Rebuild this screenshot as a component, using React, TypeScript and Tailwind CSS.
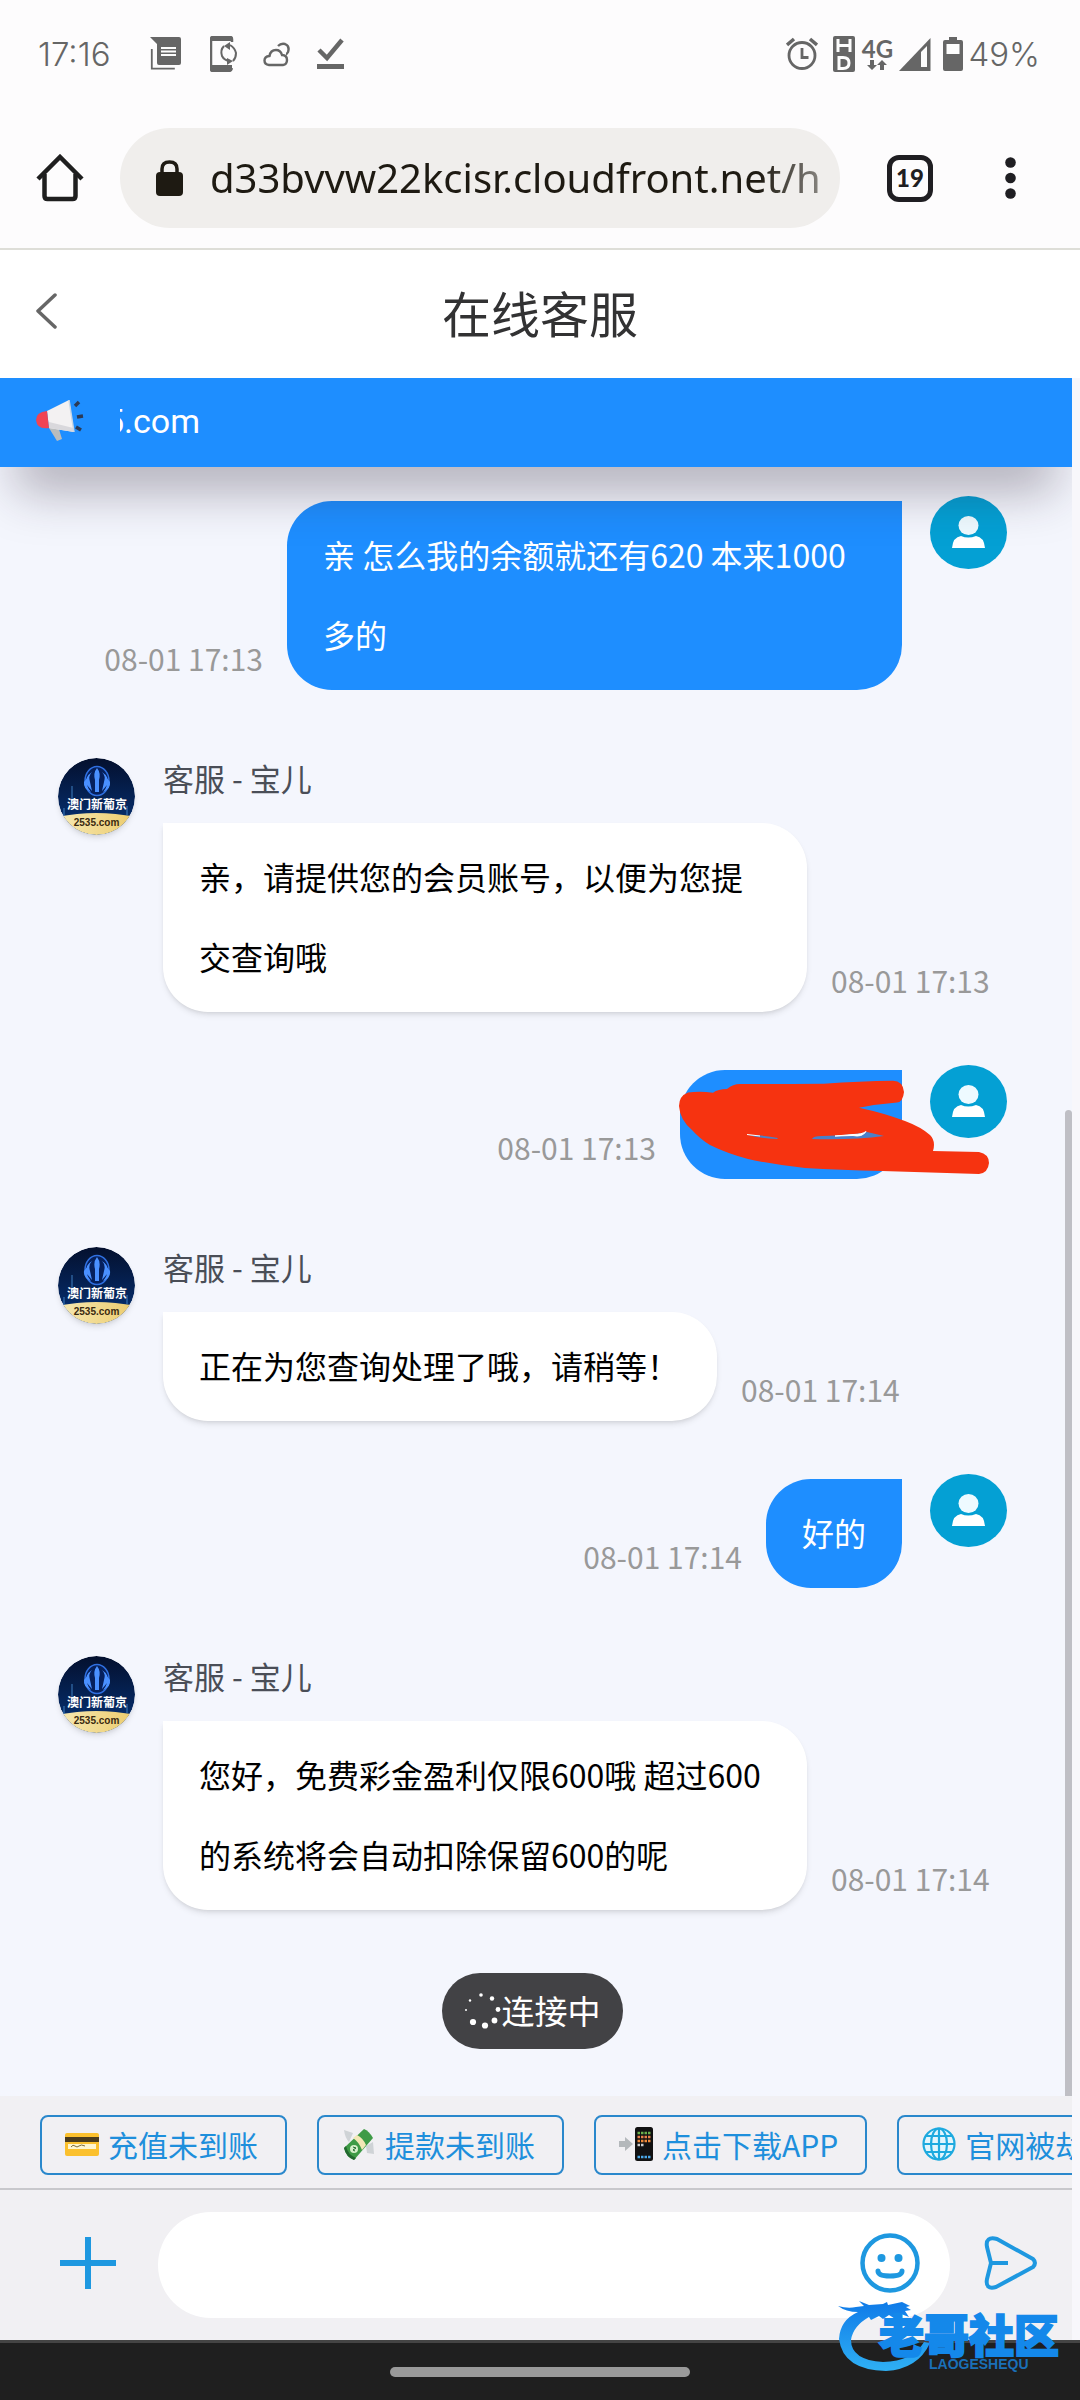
import { useState } from "react";
import type { ReactNode } from "react";

type Message = {
  id: number;
  from: "me" | "agent";
  text: string;
  time: string;
  hidden?: boolean;
};

const AGENT_NAME = "客服 - 宝儿";

const messages: Message[] = [
  { id: 1, from: "me", text: "亲 怎么我的余额就还有620 本来1000多的", time: "08-01 17:13" },
  { id: 2, from: "agent", text: "亲，请提供您的会员账号，以便为您提交查询哦", time: "08-01 17:13" },
  { id: 3, from: "me", text: "", time: "08-01 17:13", hidden: true },
  { id: 4, from: "agent", text: "正在为您查询处理了哦，请稍等！", time: "08-01 17:14" },
  { id: 5, from: "me", text: "好的", time: "08-01 17:14" },
  { id: 6, from: "agent", text: "您好，免费彩金盈利仅限600哦 超过600的系统将会自动扣除保留600的呢", time: "08-01 17:14" },
];

function StatusBar() {
  return (
    <div className="flex h-[108px] items-center justify-between pl-[38px] pr-10 text-[#666]">
      <div className="flex items-center">
        <span className="w-[112px] font-['Inter','Noto_Sans_CJK_SC',sans-serif] text-[33px] font-light leading-none">17:16</span>
        <svg width="32" height="34" viewBox="0 0 32 34" fill="currentColor" aria-hidden="true">
          <path d="M0 0h29q2 0 2 2v24q0 2-2 2H9q-2 0-2-2V7z" />
          <path d="M1.800 12v19.700h23" fill="none" stroke="currentColor" strokeWidth="1.800" />
          <path d="M11 11h15M11 14.500h15M11 18h15" stroke="#fdfdfd" strokeWidth="1.800" />
        </svg>
        <svg className="ml-7" width="28" height="36" viewBox="0 0 28 36" fill="none" stroke="currentColor" aria-hidden="true">
          <path d="M22 6V3q0-2-2-2H3Q1 1 1 3v30q0 2 2 2h16q2 0 3-3" strokeWidth="2.500" />
          <path d="M1 1h21v4H1zM1 29h21v6H1z" fill="currentColor" stroke="none" />
          <path d="M14 10q-4 4-2 10 2 4 7 5M20 9q5 3 6 8 0 5-3 8" strokeWidth="2" />
          <path d="M14 10l6-4v8zM23 25l-6-3v7z" fill="currentColor" stroke="none" />
        </svg>
        <svg className="ml-[25px]" width="28" height="25" viewBox="0 0 28 25" fill="none" stroke="currentColor" strokeWidth="2.400" aria-hidden="true">
          <path d="M6 23q-4.500-.5-4.500-4.500 0-4 5-4.500 1-6 6.500-6 4.500 0 6 5 5 0 5 5 0 4.500-4 5z" />
          <path d="M15 4q3-3 7-2 5 2 3 8-1 2-2 2" />
        </svg>
        <svg className="ml-[26px]" width="27" height="34" viewBox="0 0 27 34" fill="none" stroke="currentColor" aria-hidden="true">
          <path d="M2 13l8 8L25 3" strokeWidth="4.500" />
          <path d="M0 29.500h27" strokeWidth="5" />
        </svg>
      </div>
      <div className="flex items-center">
        <svg width="32" height="34" viewBox="0 0 32 34" fill="none" stroke="currentColor" strokeWidth="2.800" aria-hidden="true">
          <circle cx="16" cy="18.500" r="13" />
          <path d="M1 8l7-6M31 8l-7-6" strokeWidth="3.500" />
          <path d="M16 11v9.500h6.500" />
        </svg>
        <svg className="ml-[15px]" width="22" height="36" viewBox="0 0 22 36" aria-hidden="true">
          <rect width="22" height="36" rx="2" fill="#666" />
          <path d="M5 3v13M17 3v13M5 9.500h12" stroke="#fdfdfd" strokeWidth="3" />
          <path d="M6 21.500h4q6 0 6 5.500t-6 5.500H6z" fill="none" stroke="#fdfdfd" strokeWidth="3" />
        </svg>
        <div className="ml-1 flex w-9 flex-col items-center font-['Lato',sans-serif] text-2xl font-bold leading-[22px]">
          4G
          <svg width="20" height="10" viewBox="0 0 20 10" fill="currentColor" aria-hidden="true">
            <path d="M3 0h4v5h3l-5 5-5-5h3zM13 10h4V5h3l-5-5-5 5h3z" />
          </svg>
        </div>
        <svg className="ml-1" width="32" height="33" viewBox="0 0 32 33" aria-hidden="true">
          <path d="M0 33L31.500 0v33z" fill="#666" />
          <path d="M22 14l6-6v21h-6z" fill="#fdfdfd" />
        </svg>
        <svg className="ml-3" width="20" height="34" viewBox="0 0 20 34" aria-hidden="true">
          <path d="M6 0h8v3h4q2 0 2 2v27q0 2-2 2H2q-2 0-2-2V5q0-2 2-2h4z" fill="#666" />
          <path d="M3.500 7h13v10h-13z" fill="#fdfdfd" />
        </svg>
        <span className="ml-[5px] font-['Inter','Noto_Sans_CJK_SC',sans-serif] text-[33px] font-light leading-none">49%</span>
      </div>
    </div>
  );
}

function BrowserBar() {
  return (
    <div className="flex h-[142px] items-center border-b-2 border-[#deded8] px-9">
      <button type="button" aria-label="Home" className="text-[#1f1f1f]">
        <svg width="48" height="48" viewBox="0 0 48 48" fill="none" stroke="currentColor" strokeWidth="4.500" aria-hidden="true">
          <path d="M2 25L24 3l22 22" />
          <path d="M8.500 20v22q0 3 3 3h25q3 0 3-3V20" />
        </svg>
      </button>
      <label className="ml-9 flex h-[100px] min-w-0 flex-1 items-center rounded-full bg-[#f0eeec] pl-9 pr-5">
        <svg className="shrink-0" width="27" height="36" viewBox="0 0 27 36" aria-hidden="true">
          <rect y="12" width="27" height="24" rx="4" fill="#1e1a12" />
          <path d="M6 14V9q0-7 7.500-7T21 9v5" fill="none" stroke="#1e1a12" strokeWidth="3.500" />
        </svg>
        <input
          aria-label="Address"
          defaultValue="d33bvvw22kcisr.cloudfront.net/h"
          className="ml-[27px] w-full min-w-0 flex-1 bg-transparent font-['Noto_Sans',sans-serif] text-[40px] text-[#1e1a12] outline-none [mask-image:linear-gradient(to_right,black_90%,rgba(0,0,0,0.5))]"
        />
      </label>
      <button type="button" aria-label="Tabs" className="ml-[47px] flex h-[47px] w-[46px] items-center justify-center rounded-xl border-[5px] border-[#1f1e22] font-['Lato',sans-serif] text-2xl font-black text-[#1f1e22]">
        19
      </button>
      <button type="button" aria-label="More" className="ml-[72px] mr-[28px]">
        <svg width="11" height="42" viewBox="0 0 11 42" fill="#1f1e22" aria-hidden="true">
          <circle cx="5.500" cy="5.500" r="5.300" />
          <circle cx="5.500" cy="21" r="5.300" />
          <circle cx="5.500" cy="36.500" r="5.300" />
        </svg>
      </button>
    </div>
  );
}

function Header() {
  return (
    <header className="grid h-32 grid-cols-[1fr_auto_1fr] items-center bg-white px-9 pb-[6px]">
      <button type="button" aria-label="返回" className="w-6">
        <svg width="22" height="36" viewBox="0 0 22 36" fill="none" stroke="#666" strokeWidth="3.500" strokeLinecap="round" strokeLinejoin="round" aria-hidden="true">
          <path d="M19 2L2 18l17 16" />
        </svg>
      </button>
      <h1 className="text-[49px] leading-none text-[#323233]">在线客服</h1>
    </header>
  );
}

function Notice() {
  return (
    <div className="relative z-10 flex h-[89px] items-center bg-[#1e8eff] pb-1 pl-9 shadow-[0_40px_50px_-16px_rgba(40,30,50,0.34)]">
      <svg width="48" height="42" viewBox="0 0 48 42" aria-hidden="true">
        <path d="M13 28l8 13 5-2-4-13z" fill="#b9bcbd" />
        <path d="M11 11L33 0l5 32-25-4z" fill="#f3f1f2" />
        <path d="M13 28l25 4-.6-4-24.400-6z" fill="#d9d8dc" />
        <path d="M11 11q-11 1-11 9 1 10 13 8z" fill="#f04454" />
        <path d="M33 0l5 32" stroke="#c9d6e4" strokeWidth="1.500" />
        <path d="M39 6l4-4M41 17l6-1M40 27l5 3" stroke="#2c3a55" strokeWidth="3.500" />
      </svg>
      <div className="ml-9 flex w-20 justify-end overflow-hidden font-['Roboto','Noto_Sans_CJK_SC',sans-serif] text-[34px] leading-[48px] text-white">
        <span>5.com</span>
      </div>
    </div>
  );
}

function UserAvatar() {
  return (
    <svg className="shrink-0" width="77" height="73" viewBox="0 0 77 73" role="img" aria-label="我">
      <ellipse cx="38.500" cy="36.500" rx="38.500" ry="36.500" fill="#04a0d4" />
      <ellipse cx="38.500" cy="29.500" rx="10" ry="9.500" fill="#eefaff" />
      <path d="M22 52q1-11 9-12 7 3 15 0 8 1 9 12z" fill="#fff" />
    </svg>
  );
}

function AgentAvatar() {
  return (
    <svg className="shrink-0 rounded-full shadow-md" width="77" height="77" viewBox="0 0 77 77" role="img" aria-label={AGENT_NAME}>
      <defs>
        <clipPath id="agent-round">
          <circle cx="38.500" cy="38.500" r="38.500" />
        </clipPath>
        <linearGradient id="agent-night" x1="0" y1="0" x2="0" y2="1">
          <stop offset="0" stopColor="#04102e" />
          <stop offset="1" stopColor="#06347a" />
        </linearGradient>
        <linearGradient id="agent-gold" x1="0" y1="0" x2="1" y2="0">
          <stop offset="0" stopColor="#f6e9b4" />
          <stop offset="1" stopColor="#eccb6c" />
        </linearGradient>
      </defs>
      <g clipPath="url(#agent-round)">
        <rect width="77" height="77" fill="url(#agent-night)" />
        <path d="M0 59q38-8 77 0v18H0z" fill="url(#agent-gold)" />
        <path d="M14 28v15M6 50v8M69 48v9" stroke="#3f7ec0" />
        <ellipse cx="39" cy="23" rx="12" ry="14.500" fill="#06205c" stroke="#2f6fe0" strokeWidth="1.500" />
        <path d="M39 10q-4 5-2 12v12h4V22q2-7-2-12zM34 14q-4 4-2 10l2 9-5-6q-3-8 5-13zM44 14q4 4 2 10l-2 9 5-6q3-8-5-13zM29 20q-2 7 4 14-8-3-7-10zM49 20q2 7-4 14 8-3 7-10z" fill="#4a90ff" />
      </g>
      <text x="39" y="51" textAnchor="middle" fontSize="12" fontWeight="700" fill="#fff">澳门新葡京</text>
      <text x="38.500" y="68" textAnchor="middle" fontFamily="Liberation Sans, sans-serif" fontSize="10" fontWeight="700" fill="#3a2a10">2535.com</text>
    </svg>
  );
}

// Hand-drawn stroke that hides the account number
function Scribble() {
  return (
    <svg className="absolute left-0 top-0 overflow-visible" width="222" height="109" viewBox="0 0 222 109" aria-hidden="true">
      <path
        d="M-1 36Q-1 26 8 22.500Q20 21 33 22.700Q38 19 47 19Q53 14 60 14Q100 14 144 13.700Q180 11 213 10.700Q223 11 224 22Q223 32 217 32.500Q198 34 179 37.700Q204 43 225 51Q241 57 250 65Q256 71 253 81L299 82Q309 84 309 93Q308 103 299 104L202 101Q160 100 125 98Q95 95 68 89Q46 83 30 75Q20 69 12 60Q0 50-1 36z"
        fill="#f63310"
      />
      <path d="M68 65q15 0 30 3l-1 1q-18-1-29-4zM132 69q1-3 10-3 32-1 45-4l17 4q-30 4-72 3z" fill="#4b80c8" />
      <path d="M67 64.500l13 1.500M155 66l18-1.500q9 0 13-3-4 6-13 4z" stroke="#fff" fill="#fff" />
    </svg>
  );
}

function Time({ children }: { children: ReactNode }) {
  return <time className="mb-[14px] shrink-0 text-[30px] leading-9 text-[#999]">{children}</time>;
}

function MessageRow({ message }: { message: Message }) {
  if (message.from === "me") {
    return (
      <li className="mb-[68px] flex items-start justify-end gap-7">
        <div className="mt-[5px] flex items-end gap-6">
          <Time>{message.time}</Time>
          {message.hidden ? (
            <div className="relative h-[109px] w-[222px] rounded-[45px] rounded-tr-none bg-[#1e8eff]">
              <Scribble />
            </div>
          ) : (
            <p className="max-w-[615px] rounded-[45px] rounded-tr-none bg-[#1e8eff] px-9 pb-4 pt-[13px] text-[32px] leading-20 text-white">
              {message.text}
            </p>
          )}
        </div>
        <UserAvatar />
      </li>
    );
  }

  return (
    <li className="mb-[53px] flex items-start gap-7">
      <AgentAvatar />
      <div>
        <div className="mb-[25px] text-[31px] leading-10 text-[#4a4e57]">{AGENT_NAME}</div>
        <div className="flex items-end gap-6">
          <p className="max-w-[644px] rounded-[45px] rounded-tl-none bg-white pb-4 pl-9 pr-[38px] pt-[13px] text-[32px] leading-20 text-black shadow-md">
            {message.text}
          </p>
          <Time>{message.time}</Time>
        </div>
      </div>
    </li>
  );
}

function Toast() {
  return (
    <div className="absolute inset-x-0 bottom-[47px] flex justify-center pr-2">
      <div role="status" className="flex h-[76px] items-center rounded-full bg-[#424245] px-[22px] text-[33px] text-white">
        <svg width="38" height="38" viewBox="0 0 38 38" fill="#fff" aria-hidden="true">
          <circle cx="17" cy="3" r="1.800" />
          <circle cx="28" cy="6.500" r="2.200" />
          <circle cx="34" cy="17.500" r="2.400" />
          <circle cx="30.500" cy="28.500" r="2.900" />
          <circle cx="21" cy="33.500" r="3.100" />
          <circle cx="9" cy="30" r="3.100" />
          <circle cx="2" cy="18" r="1" />
          <circle cx="6" cy="8.500" r="1.200" />
        </svg>
        连接中
      </div>
    </div>
  );
}

function CardIcon() {
  return (
    <svg width="36" height="36" viewBox="0 0 36 36" aria-hidden="true">
      <rect x="1" y="7" width="34" height="23" rx="2" fill="#fbc02d" />
      <rect x="1" y="11" width="34" height="5" fill="#4a3b1c" />
      <rect x="4" y="18" width="28" height="5" fill="#fff6d0" />
      <path d="M7 21q2-3 4-1t4 0 6 0" fill="none" stroke="#7a6a3a" />
    </svg>
  );
}

function MoneyIcon() {
  return (
    <svg width="36" height="36" viewBox="0 0 36 36" aria-hidden="true">
      <path d="M3 4l9 3-4 9q-4-4-5-12zM25 20l7-4 1 12-7-1z" fill="#cfd3d6" />
      <path d="M3 22l20-19q5 2 9 9L13 34Q5 31 3 22z" fill="#3f9b46" />
      <path d="M3 22q2 9 10 12l2-2Q7 29 5 20z" fill="#23692f" />
      <path d="M12 12l4-3q6 3 9 10l-4 5q-3-8-9-12z" fill="#f3e7b5" />
      <circle cx="13" cy="23" r="4" fill="#d5efc9" />
      <path d="M12 21l3 1-3 2 2 1" stroke="#23692f" fill="none" />
    </svg>
  );
}

function PhoneIcon() {
  return (
    <svg width="36" height="36" viewBox="0 0 36 36" aria-hidden="true">
      <path d="M1 15h6v-4l8 7-8 7v-4H1z" fill="#b4b8bb" />
      <rect x="17" y="1" width="18" height="34" rx="2.500" fill="#111" />
      <path d="M19.500 7h13" stroke="#6ab04c" strokeWidth="2.500" strokeDasharray="2.500 1" />
      <path d="M19.500 11h13" stroke="#e8804a" strokeWidth="2.500" strokeDasharray="2.500 1" />
      <path d="M19.500 15h13" stroke="#f08a3a" strokeWidth="2.500" strokeDasharray="2.500 1" />
      <path d="M19.500 19h6.500" stroke="#ccc" strokeWidth="2.500" strokeDasharray="2.500 1" />
      <path d="M19.500 31h13" stroke="#4aa8e8" strokeWidth="2.500" strokeDasharray="2.500 1" />
    </svg>
  );
}

function GlobeIcon() {
  return (
    <svg width="36" height="36" viewBox="0 0 36 36" fill="none" stroke="#1eaadf" strokeWidth="2.200" aria-hidden="true">
      <circle cx="18" cy="18" r="15.500" fill="#e3f6fd" />
      <ellipse cx="18" cy="18" rx="8" ry="15.500" />
      <path d="M18 2v32M2 18h32M5 10h26M5 26h26" />
    </svg>
  );
}

const quickReplies = [
  { label: "充值未到账", icon: <CardIcon /> },
  { label: "提款未到账", icon: <MoneyIcon /> },
  { label: "点击下载APP", icon: <PhoneIcon /> },
  { label: "官网被劫持", icon: <GlobeIcon /> },
];

function QuickReplies() {
  return (
    <div className="flex h-[94px] items-center gap-[30px] overflow-hidden border-b-2 border-[#c8c8cc] pl-10 pt-[6px]">
      {quickReplies.map((reply) => (
        <button
          key={reply.label}
          type="button"
          className="flex h-[60px] shrink-0 items-center gap-2 rounded-lg border-2 border-[#2a88cc] pb-[2px] pl-[22px] pr-[27px] text-[30px] leading-none text-[#1e8fdc]"
        >
          {reply.icon}
          {reply.label}
        </button>
      ))}
    </div>
  );
}

function Composer() {
  const [draft, setDraft] = useState("");

  return (
    <form className="flex h-[150px] items-center pl-[60px] pr-[35px] text-[#1e98e0]" onSubmit={(e) => e.preventDefault()}>
      <button type="button" aria-label="添加" className="pb-1">
        <svg width="56" height="54" viewBox="0 0 56 54" stroke="currentColor" strokeWidth="6" aria-hidden="true">
          <path d="M28 1v52M0 27h56" />
        </svg>
      </button>
      <div className="ml-[42px] flex h-[106px] min-w-0 flex-1 items-center rounded-full bg-white pl-10 pr-[30px]">
        <input
          aria-label="消息"
          value={draft}
          onChange={(e) => setDraft(e.target.value)}
          className="min-w-0 flex-1 bg-transparent text-[33px] text-black outline-none"
        />
        <button type="button" aria-label="表情" className="pb-1">
          <svg width="60" height="60" viewBox="0 0 60 60" fill="none" stroke="currentColor" strokeWidth="4.500" aria-hidden="true">
            <circle cx="30" cy="30" r="27.500" />
            <path d="M18 38q0 5 12 5t12-5" strokeWidth="5" strokeLinecap="round" />
            <circle cx="21.500" cy="25" r="4" fill="currentColor" stroke="none" />
            <circle cx="38.500" cy="25" r="4" fill="currentColor" stroke="none" />
          </svg>
        </button>
      </div>
      <button type="submit" aria-label="发送" className="ml-[34px] pb-1">
        <svg width="53" height="54" viewBox="0 0 53 54" fill="none" stroke="currentColor" strokeWidth="4" strokeLinejoin="round" aria-hidden="true">
          <path d="M13 3l36 20q4 4 0 8L12 51q-11 3-9-8 4-16 4-16T3 11Q1 0 13 3z" />
          <path d="M7 27h17" />
        </svg>
      </button>
    </form>
  );
}

function Watermark() {
  return (
    <svg className="pointer-events-none absolute bottom-6 right-4 z-20" width="226" height="76" viewBox="0 0 226 76" aria-hidden="true">
      <defs>
        <linearGradient id="mark-blue" x1="0" y1="0" x2="0" y2="1">
          <stop offset="0" stopColor="#0f7ae8" />
          <stop offset="1" stopColor="#2fb0f4" />
        </linearGradient>
      </defs>
      <path
        d="M0 6q10 3 18 1l8-1-5-5 10 4 14-1 4-2 1 3 14-3 8 4-4 1 5 3-6 1 4 6-8-3-4 6-8-5-6 4-4-3-8 4-2-3Q15 26 13 40q0 20 32 22 30-1 41-20l6 1Q80 69 48 71 5 70 1 39 2 20 20 12 8 12 0 6z"
        fill="url(#mark-blue)"
      />
      <text x="41" y="53" fontSize="45" fontWeight="900" fill="#1488ea" stroke="#1488ea" strokeWidth="2">老哥社区</text>
      <text x="91" y="69" fontFamily="Liberation Sans, sans-serif" fontSize="14" fontWeight="700" fill="#1a70b8">LAOGESHEQU</text>
    </svg>
  );
}

export default function App() {
  return (
    <div className="relative flex min-h-screen flex-col bg-[#f8f7fb] font-['Noto_Sans_CJK_SC',sans-serif]">
      <div className="bg-[#fdfcfd]">
        <StatusBar />
        <BrowserBar />
      </div>
      <Header />

      <div className="mr-2 flex flex-1 flex-col overflow-hidden">
        <Notice />
        <main className="relative flex-1 bg-[#f4f6fd]">
          <ul className="pl-[58px] pr-[65px] pt-[29px]">
            {messages.map((message) => (
              <MessageRow key={message.id} message={message} />
            ))}
          </ul>
          <Toast />
          <div className="absolute bottom-0 right-0 h-[986px] w-[7px] rounded-t bg-[#bfbfc5]" />
        </main>
        <div className="bg-[#f1f0f3]">
          <QuickReplies />
          <Composer />
        </div>
      </div>

      <div className="flex h-[60px] items-center justify-center border-t-[3px] border-[#444] bg-[#1f1f1f]">
        <div className="h-[10px] w-[300px] rounded-full bg-[#9a9a9a]" />
      </div>
      <Watermark />
    </div>
  );
}
